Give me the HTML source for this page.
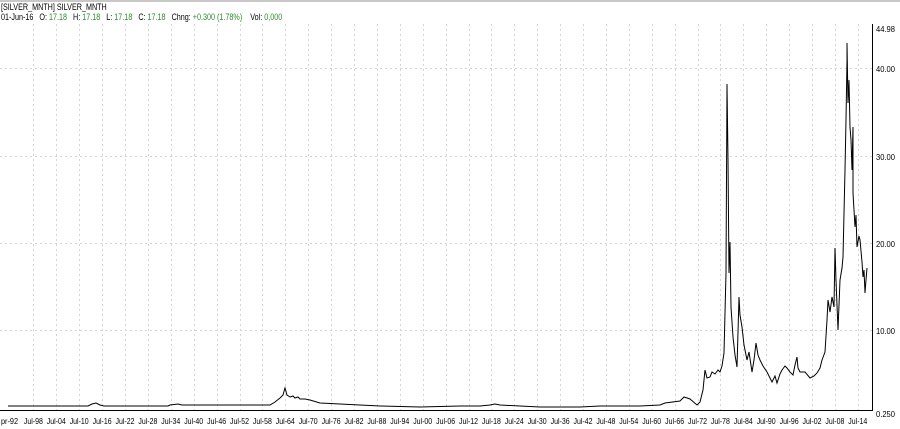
<!DOCTYPE html>
<html><head><meta charset="utf-8"><style>
html,body{margin:0;padding:0;background:#fff;}
body{width:900px;height:429px;overflow:hidden;position:relative;font-family:"Liberation Sans",Arial,sans-serif;}
.t{position:absolute;left:1px;font-size:9px;color:#000;white-space:nowrap;transform:scaleX(0.8);transform-origin:0 0;}
.g{color:#2e8b2e;}
svg{position:absolute;left:0;top:0;}
</style></head><body>
<svg width="900" height="429" font-family="Liberation Sans, Arial, sans-serif" font-size="9">
<rect x="0" y="0" width="900" height="2" fill="#c8c8c8"/>
<g stroke="#d4d4d4" stroke-width="1" stroke-dasharray="2,3">
<line x1="0" y1="68.5" x2="872" y2="68.5"/>
<line x1="0" y1="156.5" x2="872" y2="156.5"/>
<line x1="0" y1="243.5" x2="872" y2="243.5"/>
<line x1="0" y1="330.5" x2="872" y2="330.5"/>
</g>
<g id="vg" stroke="#d4d4d4" stroke-width="1" stroke-dasharray="2,3"></g>
<line x1="872.5" y1="24" x2="872.5" y2="411" stroke="#000"/>
<line x1="0" y1="410.5" x2="873" y2="410.5" stroke="#000"/>
<g fill="#000" font-size="8.5">
<text x="876" y="32" textLength="19" lengthAdjust="spacingAndGlyphs">44.98</text>
<text x="876" y="72" textLength="19" lengthAdjust="spacingAndGlyphs">40.00</text>
<text x="876" y="160" textLength="19" lengthAdjust="spacingAndGlyphs">30.00</text>
<text x="876" y="247" textLength="19" lengthAdjust="spacingAndGlyphs">20.00</text>
<text x="876" y="334" textLength="19" lengthAdjust="spacingAndGlyphs">10.00</text>
<text x="876" y="417" textLength="19" lengthAdjust="spacingAndGlyphs">0.250</text>
</g>
<g id="xl" fill="#000" font-size="8.5"></g>
<polyline fill="none" stroke="#000" stroke-width="1" points="8,406 88,406 92,404 96,403 100,405 104,406 168,406 170,405 178,404 182,405 270,405 275,402 280,398 283,395 285,388 287,395 290,397 293,396 295,398 298,397 300,399 305,399 310,400 320,403 340,404 360,405 380,406 420,407 460,406 480,406 490,405 495,404 500,405 520,406 540,407 580,407 600,406 640,406 660,405 665,403 680,401 684,397 690,399 697,405 700,402 703,390 705,370 707,378 710,377 712,372 715,374 718,370 720,372 722,366 724,353 726,273 727,84 728,160 729,273 730,242 731,307 733,337 735,355 737,367 739,297 740,315 742,327 744,345 747,360 749,352 752,372 754,360 756,343 758,355 760,360 763,366 767,372 770,378 772,382 775,376 777,383 780,374 782,370 785,366 787,368 790,372 793,375 795,365 797,357 798,368 800,372 805,372 810,378 814,376 817,373 820,368 822,360 825,352 827,320 828,300 830,312 832,297 834,307 835,248 836,280 838,330 840,280 842,268 843,257 845,170 846,120 847,60 847,43 848,103 849,80 850,127 851,140 852,170 853,127 853,193 855,227 856,215 857,247 859,236 860,240 862,262 863,277 864,270 865,293 866,280 867,268"/>
</svg>
<div class="t" style="top:2px">[SILVER_MNTH] SILVER_MNTH</div>
<div class="t" style="top:12px">01-Jun-16&nbsp;&nbsp;&nbsp;O: <span class="g">17.18</span>&nbsp;&nbsp;&nbsp;H: <span class="g">17.18</span>&nbsp;&nbsp;&nbsp;L: <span class="g">17.18</span>&nbsp;&nbsp;&nbsp;C: <span class="g">17.18</span>&nbsp;&nbsp;&nbsp;Chng: <span class="g">+0.300 (1.78%)</span>&nbsp;&nbsp;&nbsp;&nbsp;Vol: <span class="g">0,000</span></div>
<script>
var labels=["pr-92","Jul-98","Jul-04","Jul-10","Jul-16","Jul-22","Jul-28","Jul-34","Jul-40","Jul-46","Jul-52","Jul-58","Jul-64","Jul-70","Jul-76","Jul-82","Jul-88","Jul-94","Jul-00","Jul-06","Jul-12","Jul-18","Jul-24","Jul-30","Jul-36","Jul-42","Jul-48","Jul-54","Jul-60","Jul-66","Jul-72","Jul-78","Jul-84","Jul-90","Jul-96","Jul-02","Jul-08","Jul-14"];
var ns="http://www.w3.org/2000/svg",xl=document.getElementById("xl"),vg=document.getElementById("vg");
for(var i=0;i<labels.length;i++){var x=10.5+i*22.9;var t=document.createElementNS(ns,"text");
var w=(i==0)?17:19;t.setAttribute("x",(i==0)?1:x-9.5);t.setAttribute("y",424);t.setAttribute("textLength",w);t.setAttribute("lengthAdjust","spacingAndGlyphs");t.textContent=labels[i];xl.appendChild(t);
if(i>0){var l=document.createElementNS(ns,"line");var xx=Math.round(x)+0.5;l.setAttribute("x1",xx);l.setAttribute("x2",xx);l.setAttribute("y1",24);l.setAttribute("y2",410);vg.appendChild(l);}}
</script>
</body></html>
